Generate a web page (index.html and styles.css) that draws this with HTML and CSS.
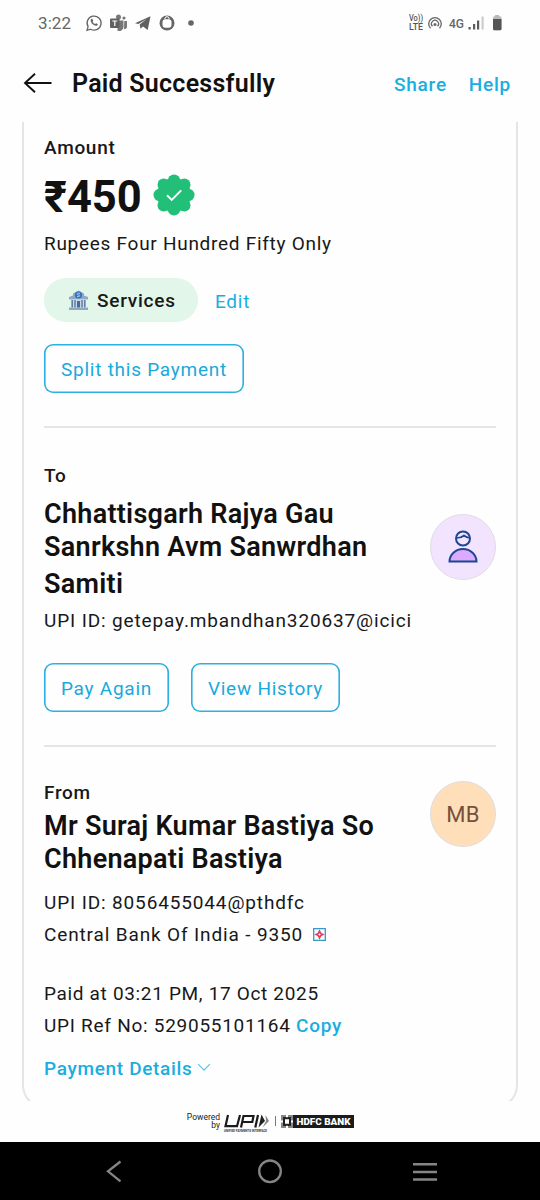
FILE: index.html
```html
<!DOCTYPE html>
<html lang="en">
<head>
<meta charset="utf-8">
<title>Paid Successfully</title>
<link rel="stylesheet" href="styles.css">
</head>
<body>
<div class="screen">
  <div class="status">
    <span class="time">3:22</span>
    <svg class="status-left" width="112" height="18" viewBox="0 0 112 18">
      <path d="M2 16.300l1.100-3.600A7 7 0 1 1 5.700 15.200z" fill="none" stroke="#666" stroke-width="1.300"/>
      <path d="M6 5.300c.9-1 1.500-.5 2.200 1.300l-.6 1.100c.6 1.100 1.400 1.900 2.500 2.400l1-.9c1.700.7 2.100 1.200 1.400 2-2.500 2.500-8.300-3-6.500-5.900z" fill="#666"/>
      <circle cx="33.500" cy="3" r="2.500" fill="#777"/><circle cx="39" cy="4" r="1.600" fill="#777"/>
      <path d="M34 6.500h4.500v6.500a4.300 4.300 0 0 1-6 3.700V14H34zM39.300 7H42v5.500a3 3 0 0 1-3 2.800z" fill="#777"/>
      <rect x="25" y="4.500" width="9.500" height="9.500" rx="1" fill="#606060"/>
      <path d="M27.300 7h5M29.800 7v5" stroke="#fff" stroke-width="1.200"/>
      <path d="M50 9.300L65.500 2.200 62.700 16l-4.700-3.400-2.500 2.200-.8-4.300 7-5.500-8.300 5z" fill="#606060"/>
      <circle cx="82" cy="9" r="7.500" fill="#666"/>
      <rect x="77.500" y="5.200" width="9" height="8.600" rx="3" fill="#fff"/><path d="M80 5.500V4.300a2 1.600 0 0 1 4 0v1.200" fill="none" stroke="#fff"/>
      <circle cx="106" cy="9" r="2.800" fill="#666"/>
    </svg>
    <svg class="status-right" width="98" height="20" viewBox="0 0 98 20">
      <text x="2" y="8" class="lte" textLength="14" lengthAdjust="spacingAndGlyphs">Vo))</text>
      <text x="2" y="17" class="lte" textLength="14" lengthAdjust="spacingAndGlyphs">LTE</text>
      <g fill="none" stroke="#666" stroke-width="1.300"><path d="M23.500 15.300a6.300 6.300 0 1 1 9 0M25.500 13.300a3.500 3.500 0 1 1 5 0"/></g><circle cx="28" cy="11.500" r="1.500" fill="#666"/>
      <text x="42" y="15" class="net" textLength="15" lengthAdjust="spacingAndGlyphs">4G</text>
      <g fill="#5c5c5c"><path d="M61.500 14h2.200v2.500h-2.200zM66 11h2.200v5.500H66zM70 7.500h2.200v9H70z"/><path d="M74.500 3.500h2.200v13h-2.200z" fill="#ccc"/></g>
      <path d="M88 2h4v2h-4z" fill="#bbb"/><rect x="86" y="3.200" width="8.500" height="14" rx="1.500" fill="#bbb"/><path d="M86 6h8.500v9.700q0 1.500-1.500 1.500h-5.500q-1.500 0-1.500-1.500z" fill="#555"/>
    </svg>
  </div>
  <header class="header">
    <svg width="30" height="24" viewBox="0 0 30 24" fill="none" stroke="#111" stroke-width="1.900"><path d="M29.500 12H3M13 2.700L3 12l10 9.300"/></svg>
    <h1 class="title">Paid Successfully</h1>
    <a class="link share">Share</a><a class="link help">Help</a>
  </header>
  <main class="viewport">
    <div class="card">
      <div class="label amount-label">Amount</div>
      <div class="amount"><span class="sum">₹450</span>
        <svg width="42" height="42" viewBox="-21 -21 42 42"><g fill="#22bf78"><circle r="17"/><circle cy="-14.300" r="6.200"/><circle cy="14.300" r="6.200"/><circle cx="-14.300" r="6.200"/><circle cx="14.300" r="6.200"/><circle cx="10.300" cy="10.300" r="6.200"/><circle cx="-10.300" cy="10.300" r="6.200"/><circle cx="10.300" cy="-10.300" r="6.200"/><circle cx="-10.300" cy="-10.300" r="6.200"/></g><path d="M-7 .2l4.700 4.700 9.500-9.500" fill="none" stroke="#fff" stroke-width="2"/></svg>
      </div>
      <div class="text words">Rupees Four Hundred Fifty Only</div>
      <div class="tags">
        <span class="chip">
          <svg width="21" height="21" viewBox="0 0 21 21"><path d="M1 7l4-1.500V3.500l5.500-3 5.500 3v2L20 7v2.500H1zM1 17.500h19V20H1z" fill="#91a7c6"/><path d="M3 9.500h15v8H3z" fill="#c9d7e3"/><path d="M4.200 10v7.500M7 10v7.500M14 10v7.500M16.800 10v7.500" stroke="#53749f" stroke-width="1.300"/><path d="M9 11h3v6.500H9z" fill="#456c9f"/><circle cx="10.500" cy="5" r="3.600" fill="#3874b8"/><path d="M12 3.500c-3-1.200-3.500 1.500-1.500 1.500s1.500 2.500-1.500 1.400" fill="none" stroke="#bfe2ff" stroke-width=".8"/></svg>
          <span class="chip-text">Services</span></span>
        <a class="edit">Edit</a>
      </div>
      <button class="btn split">Split this Payment</button>
      <hr class="rule rule-a">
      <div class="label to-label">To</div>
      <section class="party">
        <div>
          <h2 class="name"><span>Chhattisgarh Rajya Gau</span><span>Sanrkshn Avm Sanwrdhan</span><span class="tall">Samiti</span></h2>
          <div class="text upi-id">UPI ID: getepay.mbandhan320637@icici</div>
        </div>
        <div class="avatar avatar-to"><svg width="32" height="34" viewBox="0 0 32 34" fill="none" stroke="#1d4792" stroke-width="2"><path d="M2.500 31.500a13.500 12.500 0 0 1 27 0z" fill="#dcaaff"/><circle cx="16" cy="8.500" r="7" fill="#f3e4ff"/><path d="M9 8q5 .2 8-2.500 2.500 2 6 2.500" stroke-width="1.700"/></svg></div>
      </section>
      <div class="actions"><button class="btn again">Pay Again</button><button class="btn history">View History</button></div>
      <hr class="rule rule-b">
      <section class="party from">
        <div>
          <div class="label">From</div>
          <h2 class="name"><span>Mr Suraj Kumar Bastiya So</span><span>Chhenapati Bastiya</span></h2>
        </div>
        <div class="avatar avatar-from">MB</div>
      </section>
      <div class="details">
        <div class="upi-id">UPI ID: 8056455044@pthdfc</div>
        <div class="bank">Central Bank Of India - 9350 <svg width="13" height="13" viewBox="0 0 13 13"><path d="M.7.7h11.600v11.600H.7z" fill="#f4fbff" stroke="#3d96cc" stroke-width="1.300"/><path d="M6.500 3.200l1.100 2.200 2.200 1.100-2.200 1.100-1.100 2.200-1.100-2.200-2.200-1.100 2.200-1.100z" fill="#fff" stroke="#e83c5c" stroke-width="1.700"/></svg></div>
      </div>
      <div class="details reference">
        <div>Paid at 03:21 PM, 17 Oct 2025</div>
        <div class="ref">UPI Ref No: 529055101164 <a class="copy">Copy</a></div>
      </div>
      <a class="more">Payment Details <svg width="14" height="9" viewBox="0 0 14 9"><path d="M1.200 1.200L7 7.200l5.800-6" fill="none" stroke="#55c4ec" stroke-width="1.200"/></svg></a>
    </div>
  </main>
  <footer class="footer">
    <div class="powered">Powered<br>by</div>
    <svg class="upi" width="48" height="20" viewBox="0 0 48 20"><g fill="none" stroke="#1b1b1b" stroke-width="2.200"><path d="M5 2L2.500 13.200H14L17 2M18 14.500L20.500 3h10l-1.200 6H19.500M35 2l-2.700 12.500"/></g><path d="M38.500 1.500L42 8l-6.500 6.500z" fill="#222"/><path d="M42.500 2L46 8l-6.500 6.500L43 8z" fill="#888"/><text x="1" y="18.500" class="tiny" textLength="43" lengthAdjust="spacingAndGlyphs">UNIFIED PAYMENTS INTERFACE</text></svg>
    <span class="bar"></span>
    <svg class="hdfc" width="73" height="13" viewBox="0 0 73 13"><path d="M0 0h73v13H0z" fill="#1b1b1b"/><path d="M0 0h12v13H0z" fill="#888"/><path d="M2 2h8v9H2z" fill="#222"/><path d="M4 4.300h4v4.400H4zM5 0h2v2.300H5zM5 10.700h2V13H5zM0 5.500h2v2H0zM10 5.500h2v2h-2z" fill="#fff"/><text x="15.500" y="9.800" class="bank-name" textLength="54" lengthAdjust="spacingAndGlyphs">HDFC BANK</text></svg>
  </footer>
  <nav class="nav">
    <svg width="540" height="58" viewBox="0 0 540 58" fill="none" stroke="#858585" stroke-width="2.300"><path d="M120.500 19.500L108 29.300l12.500 10"/><circle cx="270" cy="29.300" r="10.800"/><path d="M413 22.200h24M413 30h24M413 37.500h24" stroke-width="2.500"/></svg>
  </nav>
</div>
</body>
</html>
```
FILE: styles.css
```css
* { box-sizing: border-box; }
body { margin: 0; background: #fefefe; color: #181818; font-family: Roboto, "Liberation Sans", sans-serif; }
.screen { width: 540px; height: 1200px; display: flex; flex-direction: column; overflow: hidden; }
.status { height: 45px; display: flex; align-items: center; padding: 0 35px 0 38px; color: #666; }
.time { width: 46px; font-size: 17px; letter-spacing: .1px; }
.status-left { margin-left: 1px; }
.status-right { margin-left: auto; }
.lte { font: 500 8.500px Roboto, sans-serif; fill: #555; }
.net { font: 500 13px Roboto, sans-serif; fill: #666; }
.header { height: 77px; padding: 0 29px 0 22px; display: flex; align-items: center; padding-bottom: 1px; }
.header svg { margin-right: 20px; }
.title { margin: 0; font-size: 25px; font-weight: 600; letter-spacing: .25px; color: #111; }
.link { color: #19aee1; font-size: 19px; font-weight: 500; letter-spacing: .75px; padding-top: 2px; }
.share { margin-left: auto; }
.help { margin-left: 22px; }
.viewport { height: 979px; padding: 0 22px; overflow: hidden; flex: none; }
.card { height: 987px; padding: 14px 20px 0; border: 2px solid #e5e5e5; border-top: 0; border-radius: 0 0 24px 24px; }
.label { height: 24px; line-height: 24px; font-size: 19px; font-weight: 500; letter-spacing: .7px; }
.amount { height: 48px; margin-top: 12px; display: flex; align-items: center; gap: 11px; }
.amount svg { margin-bottom: 2px; }
.sum { font-size: 43.500px; font-weight: 700; color: #111; padding-top: 2px; }
.text { height: 24px; line-height: 24px; font-size: 19px; letter-spacing: .72px; white-space: nowrap; }
.words { margin-top: 12px; }
.tags { margin-top: 22px; display: flex; align-items: center; gap: 17px; }
.chip { width: 154px; height: 44px; border-radius: 22px; background: #e2f6ea; display: flex; align-items: center; padding-left: 24px; gap: 8px; font-size: 19px; font-weight: 500; letter-spacing: .75px; }
.edit { font-size: 19px; letter-spacing: .75px; color: #19aee1; padding-top: 2px; }
.btn { height: 49px; padding: 2px 0 0; border: 0; box-shadow: inset 0 0 0 1.600px #2bb0df; border-radius: 9px; background: transparent; color: #19a9dc; font: 19px Roboto, sans-serif; letter-spacing: .75px; }
.split { display: block; width: 200px; margin-top: 22px; }
.rule { height: 2px; border: 0; background: #e5e5e5; }
.rule-a { margin: 33px 0 36px; }
.to-label { margin-bottom: 10px; }
.party { display: flex; justify-content: space-between; height: 134px; }
.name { margin: 0; font-size: 27px; line-height: 33px; font-weight: 600; letter-spacing: .28px; color: #111; white-space: nowrap; }
.name span { display: block; }
.name .tall { line-height: 41px; margin-bottom: 4px; }
.upi-id { letter-spacing: .86px; }
.avatar { width: 66px; height: 66px; border-radius: 50%; border: 1px solid #e0dce2; display: flex; align-items: center; justify-content: center; }
.avatar-to { margin-top: 16px; background: #f2e4ff; }
.avatar-from { background: #ffdfb9; color: #745040; font-size: 22px; letter-spacing: .3px; }
.actions { display: flex; gap: 22px; margin-top: 31px; }
.again { width: 125px; }
.history { width: 149px; }
.rule-b { margin: 33px 0 34px; }
.from { height: 106px; }
.from .label { height: 23px; line-height: 23px; margin-bottom: 6px; }
.details { line-height: 32px; font-size: 19px; letter-spacing: .75px; white-space: nowrap; }
.bank { letter-spacing: .86px; }
.bank svg { margin-left: 4px; }
.reference { margin-top: 27px; letter-spacing: .67px; }
.ref { letter-spacing: .73px; }
.copy { color: #19aee1; font-weight: 500; }
.more { display: block; margin-top: 15px; line-height: 24px; color: #19aee1; font-size: 19px; font-weight: 500; letter-spacing: .67px; }
.more svg { vertical-align: 3px; margin-left: -1px; }
.footer { height: 41px; padding: 0 0 1px 186px; display: flex; align-items: center; }
.powered { width: 34px; text-align: right; font-size: 8.500px; line-height: 8px; color: #222; }
.upi { margin: 3px 0 0 3px; }
.bar { width: 1px; height: 10px; background: #777; margin: 0 5px 0 4px; }
.tiny { font: 700 3px Roboto, sans-serif; fill: #333; }
.bank-name { font: 900 8.500px Roboto, sans-serif; fill: #fff; }
.nav { height: 58px; background: #000; }
```
